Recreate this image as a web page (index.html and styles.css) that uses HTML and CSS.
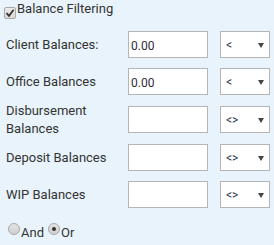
FILE: index.html
```html
<!DOCTYPE html>
<html lang="en">
<head>
<meta charset="UTF-8" />
<title>Balance Filtering</title>
<link rel="stylesheet" href="styles.css">
</head>
<body>
  <form class="balance-filter">
    <label class="head">
      <span class="fake-check">
        <svg width="10" height="10" viewBox="0 0 10 10"><path d="M1.5 5.2 L4 7.8 L8.6 1.8" fill="none" stroke="#333" stroke-width="1.8"/></svg>
      </span>
      Balance Filtering
    </label>

    <div class="rows">
      <label class="row-label" for="client">Client Balances:</label>
      <input type="text" id="client" class="amount" value="0.00" />
      <div class="op"><select><option>&lt;</option></select></div>

      <label class="row-label" for="office">Office Balances</label>
      <input type="text" id="office" class="amount" value="0.00" />
      <div class="op"><select><option>&lt;</option></select></div>

      <label class="row-label" for="disb">Disbursement Balances</label>
      <input type="text" id="disb" class="amount" />
      <div class="op"><select><option>&lt;&gt;</option></select></div>

      <label class="row-label" for="deposit">Deposit Balances</label>
      <input type="text" id="deposit" class="amount" />
      <div class="op"><select><option>&lt;&gt;</option></select></div>

      <label class="row-label" for="wip">WIP Balances</label>
      <input type="text" id="wip" class="amount" />
      <div class="op"><select><option>&lt;&gt;</option></select></div>
    </div>

    <div class="logic">
      <span class="fake-radio"></span><span class="logic-text">And</span>
      <span class="fake-radio checked"></span><span class="logic-text">Or</span>
    </div>
  </form>
</body>
</html>
```

FILE: styles.css
```css
* {
  box-sizing: border-box;
}
body {
  margin: 0;
  background: #e9f3fb;
  font-family: Roboto, "Liberation Sans", sans-serif;
  font-size: 13px;
  color: #333;
}
.balance-filter {
  padding-top: 1px;
}
.head {
  display: flex;
  align-items: flex-start;
  line-height: 15px;
}
.fake-check {
  width: 12px;
  height: 12px;
  margin: 6px 1px 0 4px;
  border: 1px solid #a9a9a9;
  border-radius: 2px;
  background: linear-gradient(#ebebeb, #d8d8d8);
  display: flex;
  align-items: center;
  justify-content: center;
}
.rows {
  display: grid;
  grid-template-columns: 110px 80px 50px;
  grid-template-rows: 27px 27px 29px 27px 27px;
  column-gap: 12px;
  row-gap: 10px;
  margin-top: 12px;
  padding-left: 6px;
}
.row-label {
  align-self: center;
  line-height: 18px;
}
.amount {
  width: 80px;
  height: 27px;
  margin: 0;
  padding: 2px 0 0 2px;
  border: 1px solid #b5b5b5;
  background: #fff;
  font-family: Roboto, "Liberation Sans", sans-serif;
  font-size: 12px;
  color: #2b2b3b;
  align-self: center;
}
.op {
  position: relative;
  align-self: center;
}
.op select {
  appearance: none;
  -webkit-appearance: none;
  width: 50px;
  height: 27px;
  margin: 0;
  padding: 1px 0 0 5px;
  border: 1px solid #b5b5b5;
  border-radius: 0;
  background: #fff;
  font-family: Roboto, "Liberation Sans", sans-serif;
  font-size: 12px;
  color: #2b3550;
}
.op::after {
  content: "";
  position: absolute;
  right: 6px;
  top: 12px;
  border-left: 3px solid transparent;
  border-right: 3px solid transparent;
  border-top: 5px solid #444;
  pointer-events: none;
}
.logic {
  display: flex;
  align-items: flex-start;
  margin-top: 15px;
  line-height: 15px;
}
.fake-radio {
  width: 12px;
  height: 12px;
  margin: 0 1px 0 8px;
  border: 1px solid #a8a8a8;
  border-radius: 50%;
  background: linear-gradient(#e4e4e4, #cfcfcf);
  display: flex;
  align-items: center;
  justify-content: center;
}
.fake-radio + .logic-text + .fake-radio {
  margin-left: 4px;
}
.fake-radio.checked::after {
  content: "";
  width: 4px;
  height: 4px;
  border-radius: 50%;
  background: #333;
}
.logic-text {
  margin-top: 2px;
}
```
